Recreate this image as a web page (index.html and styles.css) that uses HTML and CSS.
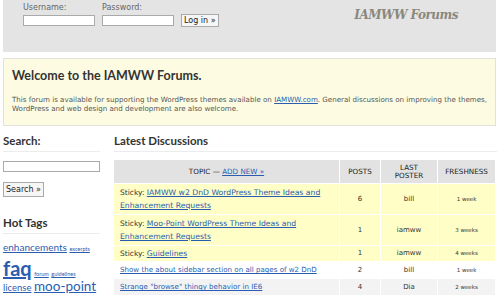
FILE: index.html
```html
<!DOCTYPE html>
<html lang="en">
<head>
    <meta charset="UTF-8">
    <title>IAMWW Forums</title>
    <link rel="stylesheet" href="styles.css">
</head>
<body>
    <div class="header">
        <form class="login">
            <label class="field">Username:<input type="text"></label>
            <label class="field">Password:<input type="password"></label>
            <button type="button" class="btn">Log in &raquo;</button>
        </form>
        <h1 class="logo">IAMWW Forums</h1>
    </div>

    <div class="welcome">
        <h2>Welcome to the IAMWW Forums.</h2>
        <p>This forum is available for supporting the WordPress themes available on <a href="#">IAMWW.com</a>. General discussions on improving the themes, WordPress and web design and development are also welcome.</p>
    </div>

    <div class="main">
        <div class="sidebar">
            <h3>Search:</h3>
            <input type="text" class="search-box">
            <button type="button" class="btn search-btn">Search &raquo;</button>
            <h3 class="tags-title">Hot Tags</h3>
            <div class="tags">
                <a href="#" class="t11">enhancements</a> <a href="#" class="t5">excerpts</a>
                <a href="#" class="t20">faq</a> <a href="#" class="t5">forum</a> <a href="#" class="t5">guidelines</a>
                <a href="#" class="t9">license</a> <a href="#" class="t15">moo-point</a>
            </div>
        </div>

        <div class="content">
            <h3>Latest Discussions</h3>
            <table class="topics">
                <tr>
                    <th class="topic-col">Topic &mdash; <a href="#">Add New &raquo;</a></th>
                    <th class="posts-col">Posts</th>
                    <th class="poster-col">Last<br>Poster</th>
                    <th class="fresh-col">Freshness</th>
                </tr>
                <tr class="sticky">
                    <td>Sticky: <a href="#" class="big">IAMWW w2 DnD WordPress Theme Ideas and Enhancement Requests</a></td>
                    <td class="num">6</td>
                    <td class="num">bill</td>
                    <td class="num fresh">1 week</td>
                </tr>
                <tr class="sticky">
                    <td>Sticky: <a href="#" class="big">Moo-Point WordPress Theme Ideas and Enhancement Requests</a></td>
                    <td class="num">1</td>
                    <td class="num">iamww</td>
                    <td class="num fresh">3 weeks</td>
                </tr>
                <tr class="sticky single">
                    <td>Sticky: <a href="#" class="big">Guidelines</a></td>
                    <td class="num">1</td>
                    <td class="num">iamww</td>
                    <td class="num fresh">4 weeks</td>
                </tr>
                <tr>
                    <td><a href="#">Show the about sidebar section on all pages of w2 DnD</a></td>
                    <td class="num">2</td>
                    <td class="num">bill</td>
                    <td class="num fresh">1 week</td>
                </tr>
                <tr class="alt">
                    <td><a href="#">Strange "browse" thingy behavior in IE6</a></td>
                    <td class="num">4</td>
                    <td class="num">Dia</td>
                    <td class="num fresh">2 weeks</td>
                </tr>
            </table>
        </div>
    </div>
</body>
</html>
```

FILE: styles.css
```css
body {
    margin: 0;
    background: #fff;
    color: #333;
    font-family: "DejaVu Sans", Verdana, sans-serif;
    width: 500px;
    height: 298px;
    overflow: hidden;
}
a {
    color: #2a5db0;
}
.header {
    margin: 0 4px 0 3px;
    height: 52px;
    background: #e4e4e4;
    display: flex;
    justify-content: space-between;
}
.login {
    display: flex;
    align-items: flex-end;
    gap: 7px;
    padding: 2px 0 0 20px;
    height: 24px;
}
.field {
    display: flex;
    flex-direction: column;
    gap: 3px;
    font-size: 8px;
    color: #666;
}
.field input {
    width: 70px;
    height: 9px;
    border: 1px solid #aaa;
    padding: 0;
    margin: 0;
}
.btn {
    font-family: "DejaVu Sans", Verdana, sans-serif;
    font-size: 8px;
    color: #222;
    background: #f6f6f6;
    border: 1px solid #aaa;
    padding: 1px 2px;
    margin-bottom: -1px;
}
.logo {
    margin: 8px 38px 0 0;
    font-family: "DejaVu Serif", Georgia, serif;
    font-style: italic;
    font-weight: bold;
    font-size: 12px;
    letter-spacing: -0.5px;
    color: #8a887c;
}
.welcome {
    margin: 6px 4px 0 3px;
    height: 66px;
    background: #fdfce2;
    border: 1px solid #e2e2dc;
    padding: 0 8px;
}
.welcome h2 {
    margin: 9px 0 12px;
    font-family: Lato, "DejaVu Sans", sans-serif;
    font-size: 12.5px;
    color: #333;
}
.welcome p {
    margin: 0;
    font-size: 7.1px;
    line-height: 9px;
    color: #555;
}
.main {
    display: flex;
    gap: 14px;
    padding: 8px 3px 0 3px;
}
.sidebar {
    width: 97px;
    flex: none;
}
h3 {
    margin: 0;
    font-family: Lato, "DejaVu Sans", sans-serif;
    font-size: 11.5px;
    color: #333;
    padding-bottom: 4px;
    border-bottom: 1px solid #ececec;
}
.search-box {
    display: block;
    width: 95px;
    height: 9px;
    border: 1px solid #aaa;
    padding: 0;
    margin: 9px 0 10px;
}
.search-btn {
    display: block;
    padding: 2px 2px;
}
.tags-title {
    margin-top: 20px;
}
.tags {
    font-family: Lato, "DejaVu Sans", sans-serif;
    font-size: 10px;
    line-height: 1.2;
    padding-top: 7px;
}
.tags a {
    color: #2a5db0;
    white-space: nowrap;
}
.t5 { font-size: 5.5px; }
.t9 { font-size: 9.5px; }
.t11 { font-size: 10px; }
.t15 { font-size: 13.5px; }
.t20 {
    display: inline-block;
    margin-top: 5px;
    font-size: 20px;
    line-height: 1;
    font-weight: bold;
}
.content {
    flex: 1;
}
.topics {
    margin-top: 7px;
    width: 100%;
    border-collapse: separate;
    border-spacing: 1px;
    margin-left: -1px;
    font-size: 7.5px;
}
.topics th {
    background: #e2e2e2;
    text-transform: uppercase;
    font-weight: normal;
    font-size: 7.2px;
    line-height: 8px;
    color: #222;
    height: 23px;
    padding: 0 2px;
}
.topics th a {
    color: #2a5db0;
}
.topic-col { width: 221px; }
.posts-col { width: 36px; }
.poster-col { width: 52px; }
.topics td {
    padding: 2px 3px 2px 6px;
    color: #333;
    vertical-align: middle;
    background: #fff;
    line-height: 12px;
}
.topics tr.sticky td {
    background: #fefec6;
    line-height: 13px;
}
.topics tr.single td {
    line-height: 11px;
}
.topics tr.alt td {
    background: #f3f3f3;
}
.topics td a {
    font-size: 7.1px;
}
.topics td a.big {
    font-size: 7.7px;
}
.num {
    text-align: center;
}
.topics td.num {
    padding-left: 3px;
    font-size: 7px;
}
.topics td.fresh {
    font-size: 5.5px;
}
```
